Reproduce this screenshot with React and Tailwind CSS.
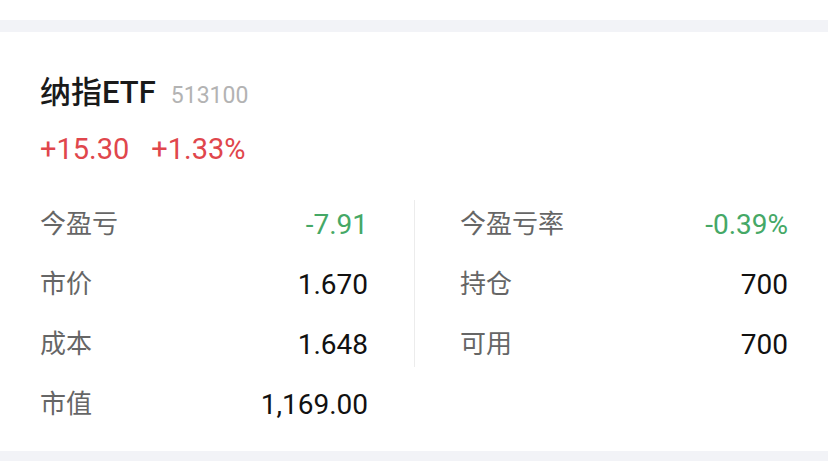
import React from 'react';

const font = { fontFamily: 'Roboto, "Noto Sans CJK SC", sans-serif' };

const leftRows = [
  { label: '今盈亏', value: '-7.91', tone: 'green' },
  { label: '市价', value: '1.670' },
  { label: '成本', value: '1.648' },
  { label: '市值', value: '1,169.00' },
];

const rightRows = [
  { label: '今盈亏率', value: '-0.39%', tone: 'green' },
  { label: '持仓', value: '700' },
  { label: '可用', value: '700' },
];

const Row = ({ label, value, tone }) => (
  <div className="flex h-[60px] items-center justify-between">
    <span className="text-[26px] text-[#666666]">{label}</span>
    <span className={`text-[28px] ${tone === 'green' ? 'text-[#45a866]' : 'text-[#111111]'}`}>
      {value}
    </span>
  </div>
);

const App = () => {
  return (
    <div className="flex h-[461px] w-[828px] flex-col bg-white" style={font}>
      <div className="h-[20px] bg-white" />
      <div className="h-[12px] bg-[#f2f3f7]" />

      {/* Position card */}
      <div className="bg-white px-10 pt-[43px] pb-[16px]">
        <div className="flex items-baseline gap-[15px]">
          <h1 className="text-[31px] font-medium leading-[36px] text-[#1a1a1a]">纳指ETF</h1>
          <span className="text-[23px] text-[#b3b3b3]">513100</span>
        </div>
        <div className="mt-[17px] flex gap-[22px] text-[29px] leading-[36px] text-[#e0464c]">
          <span>+15.30</span>
          <span>+1.33%</span>
        </div>

        <div className="mt-[28px] flex">
          <div className="flex-1 pr-[46px]">
            {leftRows.map((r) => (
              <Row key={r.label} {...r} />
            ))}
          </div>
          <div className="mt-[5px] h-[167px] w-px bg-[#ececec]" />
          <div className="flex-1 pl-[45px]">
            {rightRows.map((r) => (
              <Row key={r.label} {...r} />
            ))}
          </div>
        </div>
      </div>

      <div className="flex-1 bg-[#f2f3f7]" />
    </div>
  );
};

export default App;
